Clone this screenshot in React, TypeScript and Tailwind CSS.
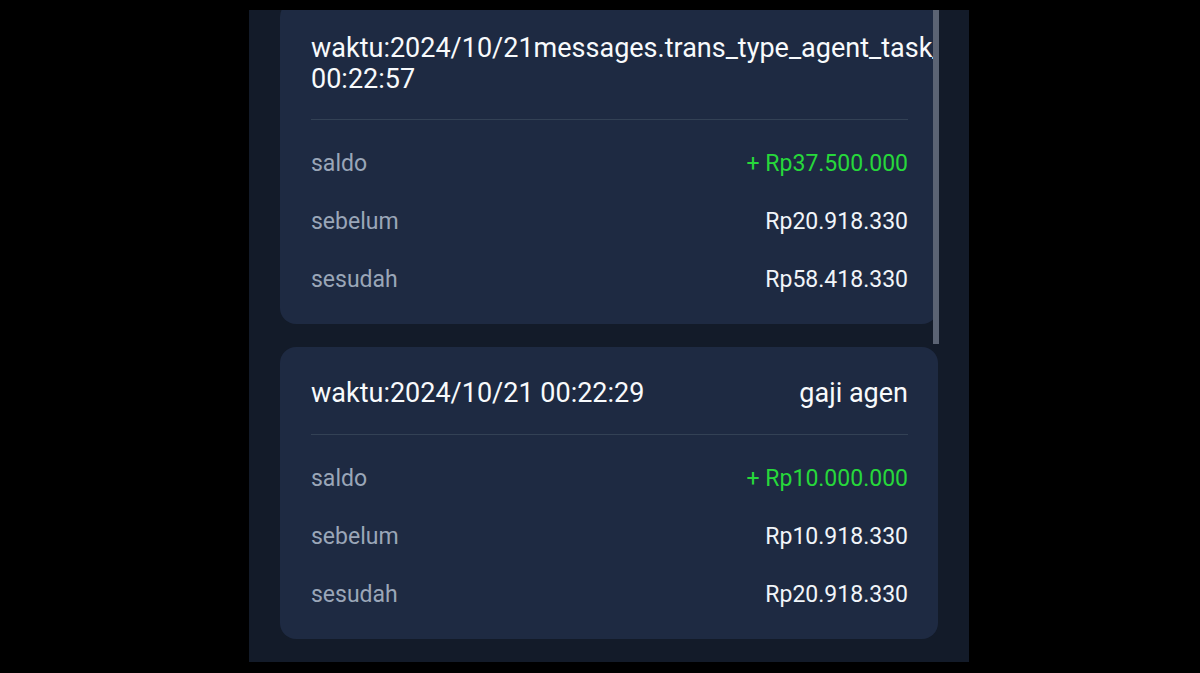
const rows1 = [
  { label: 'saldo', value: '+ Rp37.500.000', green: true },
  { label: 'sebelum', value: 'Rp20.918.330' },
  { label: 'sesudah', value: 'Rp58.418.330' },
];

const rows2 = [
  { label: 'saldo', value: '+ Rp10.000.000', green: true },
  { label: 'sebelum', value: 'Rp10.918.330' },
  { label: 'sesudah', value: 'Rp20.918.330' },
];

type Row = { label: string; value: string; green?: boolean };

function Rows({ rows }: { rows: Row[] }) {
  return (
    <div className="flex flex-col pt-[15px] pb-[15px]">
      {rows.map((r) => (
        <div key={r.label} className="flex items-center justify-between h-[58px] text-[23px]">
          <span className="text-[#9aa6b8]">{r.label}</span>
          <span className={r.green ? 'text-[#27d83b]' : 'text-[#f1f5f9]'}>{r.value}</span>
        </div>
      ))}
    </div>
  );
}

export default function App() {
  return (
    <div className="w-[1200px] h-[673px] bg-black pt-[10px] pl-[249px]" style={{ fontFamily: 'Roboto, "Noto Sans", sans-serif' }}>
      <div className="relative w-[720px] h-[652px] bg-[#131b29] overflow-hidden">
        <div className="flex flex-col gap-[23px] pl-[31px] w-[689px] -mt-[9px]">
          <div className="bg-[#1e2a42] rounded-[16px] overflow-hidden pl-[31px]">
            <div className="pt-[32px] pb-[24px] text-[27px] leading-[31px] text-[#f8fafc] whitespace-nowrap">
              <div>waktu:2024/10/21messages.trans_type_agent_task_finish</div>
              <div>00:22:57</div>
            </div>
            <div className="mr-[30px] border-t border-[#334155]" />
            <div className="mr-[30px]">
              <Rows rows={rows1} />
            </div>
          </div>
          <div className="bg-[#1e2a42] rounded-[16px] px-[30px] pl-[31px]">
            <div className="flex items-center justify-between h-[87px] pt-[5px] text-[27px] text-[#f8fafc]">
              <span>waktu:2024/10/21 00:22:29</span>
              <span>gaji agen</span>
            </div>
            <div className="border-t border-[#334155]" />
            <Rows rows={rows2} />
          </div>
        </div>
        <div className="absolute top-0 left-[684px] w-[6px] h-[334px] bg-[#5b6373]" />
      </div>
    </div>
  );
}
